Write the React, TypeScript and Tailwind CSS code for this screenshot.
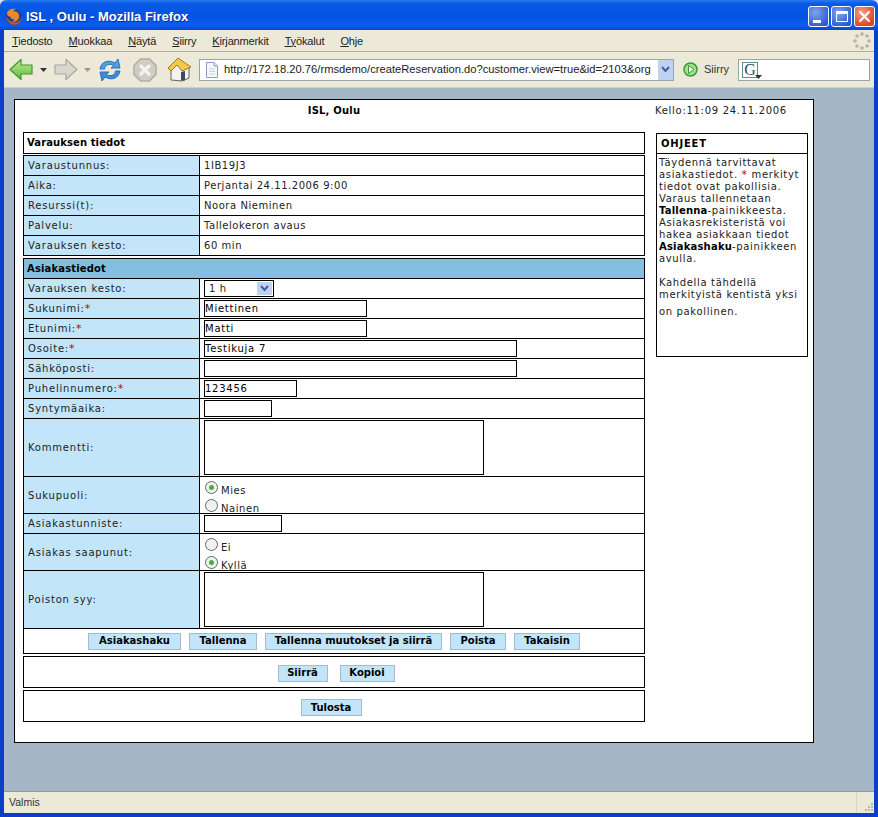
const Star = () => <span className="text-[#c00000] text-[11px] leading-none">*</span>;

function Firefox() {
  return (
    <svg width="18" height="18" viewBox="0 0 18 18" className="shrink-0">
      <circle cx="9" cy="9" r="8" fill="#31407f" />
      <circle cx="9.500" cy="7.500" r="4.200" fill="#7f93c8" />
      <path d="M2 5 C3 1.500 7 0 11 1 C9 1.500 8 3 8.500 4.200 C10.500 3.500 14 5 14 8.500 C14 12.500 10 14.500 6.500 13.500 C9 13.500 10.500 11.500 9.500 9.800 C8.500 10.800 5.500 10.500 5.200 8.500 C3.200 8.500 1.800 7 2 5Z" fill="#ef8a1e" />
      <path d="M1.500 8.500 C1.500 13 5 17 9.500 16.800 C14 16.600 16.800 12.800 16.700 8.500 C16 12.500 13 15 9 14.600 C5.500 14.200 2.800 12 1.500 8.500Z" fill="#d9541a" />
    </svg>
  );
}

function Arrow({ dir, green }: { dir: "l" | "r"; green?: boolean }) {
  const d = "M1 11.500 L12 1.500 V7 H23 V16 H12 V21.500Z";
  return (
    <svg width="24" height="23" viewBox="0 0 24 23" className={dir === "r" ? "-scale-x-100" : ""}>
      <defs>
        <linearGradient id="greenArrow" x1="0" y1="0" x2="0" y2="1">
          <stop offset="0" stopColor="#c6ee94" />
          <stop offset="1" stopColor="#58b83c" />
        </linearGradient>
      </defs>
      <path d={d} fill={green ? "url(#greenArrow)" : "#d9d8d0"} stroke={green ? "#3c9a2c" : "#a8a8a0"} strokeWidth="1.200" strokeLinejoin="round" />
    </svg>
  );
}

function Caret({ dim }: { dim?: boolean }) {
  return (
    <svg width="7" height="4" viewBox="0 0 7 4">
      <path d="M0 0H7L3.500 4Z" fill={dim ? "#9a9a94" : "#333"} />
    </svg>
  );
}

function Reload() {
  return (
    <svg width="24" height="26" viewBox="0 0 24 26">
      <path d="M2 12 C3 5 10 2 17 6 L20 2 L22 11 L13 11 L16 8.500 C11 6 7 8 6.500 12Z" fill="#4f9fe6" stroke="#2a6fc0" strokeWidth="1" strokeLinejoin="round" />
      <path d="M22 14 C21 21 14 24 7 20 L4 24 L2 15 L11 15 L8 17.500 C13 20 17 18 17.500 14Z" fill="#3a8ade" stroke="#2a6fc0" strokeWidth="1" strokeLinejoin="round" />
    </svg>
  );
}

function Stop() {
  return (
    <svg width="24" height="24" viewBox="0 0 24 24">
      <path d="M7.500 1 H16.500 L23 7.500 V16.500 L16.500 23 H7.500 L1 16.500 V7.500Z" fill="#cfcdc4" stroke="#aeaca4" strokeWidth="1.500" />
      <path d="M8 8 L16 16 M16 8 L8 16" stroke="#f4f3ee" strokeWidth="3.200" strokeLinecap="round" />
    </svg>
  );
}

function Home() {
  return (
    <svg width="25" height="25" viewBox="0 0 25 25">
      <path d="M4 12 V23 L15 24 L22 21 V11 L11 4Z" fill="#f4f3ee" stroke="#5f666e" strokeWidth="1" />
      <path d="M1 11 L11 1 L24 10 L15 14 L10 8 L4 14Z" fill="#f2c94a" stroke="#a07820" strokeWidth="1" strokeLinejoin="round" />
      <path d="M14 15 L18 14 V23.500 L14 23.500Z" fill="#3f4c60" />
    </svg>
  );
}

function PageIcon() {
  return (
    <svg width="14" height="16" viewBox="0 0 14 16">
      <path d="M1.500 .5 H9 L12.500 4 V15.500 H1.500Z" fill="#f4f7fd" stroke="#8a9cc0" />
      <path d="M9 .5 V4 H12.500" fill="#dfe6f5" stroke="#8a9cc0" />
      <path d="M4 7H10M4 9.500H10M4 12H10" stroke="#c4d0e8" />
    </svg>
  );
}

function Chevron() {
  return (
    <svg width="9" height="7" viewBox="0 0 9 7">
      <path d="M1 1 L4.500 5 L8 1" fill="none" stroke="#3f5f9f" strokeWidth="2" />
    </svg>
  );
}

function Go() {
  return (
    <svg width="15" height="15" viewBox="0 0 15 15">
      <circle cx="7.500" cy="7.500" r="6.500" fill="#a4e08a" stroke="#3c9a3c" strokeWidth="1.500" />
      <path d="M5.500 3.500 L11 7.500 L5.500 11.500Z" fill="#f0fbe8" stroke="#3c9a3c" />
    </svg>
  );
}

function Throbber() {
  const dots = [[9, 2], [14, 4], [16, 9], [14, 14], [9, 16], [4, 14], [2, 9], [4, 4]];
  return (
    <svg width="18" height="18" viewBox="0 0 18 18">
      {dots.map(([x, y]) => (
        <circle key={`${x}-${y}`} cx={x} cy={y} r="1.800" fill="#b5b3aa" />
      ))}
    </svg>
  );
}

function Grip() {
  const dots = [[9, 2], [6, 5], [9, 5], [3, 8], [6, 8], [9, 8]];
  return (
    <svg width="12" height="11" viewBox="0 0 12 11">
      {dots.map(([x, y]) => (
        <rect key={`${x}-${y}`} x={x} y={y} width="2" height="2" fill="#bdb9a8" />
      ))}
    </svg>
  );
}

function WinBtn({ kind }: { kind: "min" | "max" | "close" }) {
  const bg =
    kind === "close"
      ? "bg-[radial-gradient(circle_at_35%_30%,#f0a088,#d84a20_75%)]"
      : "bg-[radial-gradient(circle_at_35%_30%,#7ea4f0,#2a5ad0_80%)]";
  return (
    <div className={`w-[21px] h-[21px] rounded-[3px] border border-white flex items-center justify-center ${bg}`}>
      {kind === "min" && <div className="w-[8px] h-[3px] bg-white mt-[9px] -ml-[4px]" />}
      {kind === "max" && <div className="w-[12px] h-[11px] border border-white border-t-[3px]" />}
      {kind === "close" && (
        <svg width="13" height="13" viewBox="0 0 13 13">
          <path d="M2 2 L11 11 M11 2 L2 11" stroke="white" strokeWidth="2.200" strokeLinecap="round" />
        </svg>
      )}
    </div>
  );
}

function Row({
  label,
  h = 20,
  children,
}: {
  label: React.ReactNode;
  h?: number;
  children: React.ReactNode;
}) {
  const hClass: Record<number, string> = {
    20: "h-[20px]",
    37: "h-[37px]",
    58: "h-[58px]",
  };
  return (
    <div className={`flex border-b border-black ${hClass[h]}`}>
      <div className="w-[176px] shrink-0 bg-[#c2e5fa] border-r border-black flex items-center pl-[4px] text-[#222] tracking-[0.8px] whitespace-nowrap">
        {label}
      </div>
      <div className="flex-1 min-w-0 pl-[4px] flex items-center text-[#222] tracking-[0.55px]">{children}</div>
    </div>
  );
}

function Field({ w }: { w: string }) {
  return <div className={`h-[17px] border border-black bg-white ${w}`} />;
}

function ValueField({ w, value }: { w: string; value: string }) {
  return (
    <input
      readOnly
      value={value}
      className={`h-[17px] border border-black bg-white ${w} pl-0 outline-none text-[10px] tracking-[0.75px] text-black`}
    />
  );
}

function Area() {
  return <textarea readOnly className="w-[280px] h-[55px] border border-black bg-white resize-none block outline-none" />;
}

function Radio({ checked, label }: { checked?: boolean; label: string }) {
  return (
    <div className="flex h-[18px] items-start">
      <span className="ml-[1px] w-[13px] h-[13px] rounded-full border border-[#5c6a6a] bg-[#f2f2ec] flex items-center justify-center mt-[1px] shrink-0">
        {checked && <span className="w-[5px] h-[5px] rounded-full bg-[#4ca84c]" />}
      </span>
      <span className="ml-[3px] mt-[5px] leading-[12px]">{label}</span>
    </div>
  );
}

function Btn({ w, children }: { w: string; children: React.ReactNode }) {
  return (
    <button className={`h-[17px] ${w} bg-[#c2e5fa] border border-[#a3bccd] font-bold text-[10px] text-black flex items-center justify-center leading-none tracking-normal`}>
      {children}
    </button>
  );
}

export default function App() {
  const menu: [string, string][] = [
    ["T", "iedosto"],
    ["M", "uokkaa"],
    ["N", "äytä"],
    ["S", "iirry"],
    ["K", "irjanmerkit"],
    ["Ty", "ökalut"],
    ["O", "hje"],
  ];
  return (
    <div className="w-[878px] h-[817px] flex flex-col overflow-hidden font-['DejaVu_Sans',sans-serif] text-[10px] tracking-[0.45px] bg-[#dfe5f0]">
      {/* title bar */}
      <div className="h-[30px] shrink-0 flex items-center pl-[5px] pr-[3px] pt-[3px] rounded-t-[6px] bg-[linear-gradient(#2a7af0_0%,#0a5ae8_12%,#0553e2_50%,#0a5cf0_85%,#0348c8_100%)]">
        <Firefox />
        <span className="ml-[3px] text-white font-bold text-[13px] tracking-normal font-['Liberation_Sans',sans-serif] [text-shadow:1px_1px_0_#0a2f90]">
          ISL , Oulu - Mozilla Firefox
        </span>
        <div className="ml-auto flex gap-[2px]">
          <WinBtn kind="min" />
          <WinBtn kind="max" />
          <WinBtn kind="close" />
        </div>
      </div>

      <div className="flex-1 min-h-0 flex flex-col border-x-4 border-[#0a3fc8] bg-[#ece9d8]">
        {/* menu */}
        <div className="h-[22px] shrink-0 flex items-center pl-[8px] pt-[1px] gap-[16px] border-b border-[#b0ae9e] text-[11px] tracking-[-0.15px] text-[#222] font-['Liberation_Sans',sans-serif]">
          {menu.map(([u, rest]) => (
            <span key={u}>
              <span className="underline">{u}</span>
              {rest}
            </span>
          ))}
          <div className="ml-auto mr-[3px]">
            <Throbber />
          </div>
        </div>

        {/* toolbar */}
        <div className="h-[36px] shrink-0 flex items-center font-['Liberation_Sans',sans-serif] tracking-normal border-b border-[#d4d0c0]">
          <div className="ml-[5px]"><Arrow dir="l" green /></div>
          <div className="ml-[7px]"><Caret /></div>
          <div className="ml-[7px]"><Arrow dir="r" /></div>
          <div className="ml-[6px]"><Caret dim /></div>
          <div className="ml-[7px]"><Reload /></div>
          <div className="ml-[11px]"><Stop /></div>
          <div className="ml-[10px]"><Home /></div>
          <div className="ml-[7px] w-[475px] h-[22px] bg-white border border-[#9aa5a5] flex items-center pl-[5px]">
            <PageIcon />
            <span className="ml-[5px] text-[11.2px] text-[#222] whitespace-nowrap flex-1 min-w-0">
              http://172.18.20.76/rmsdemo/createReservation.do?customer.view=true&amp;id=2103&amp;org
            </span>
            <div className="w-[15px] h-[20px] bg-[#c0d2f2] flex items-center justify-center shrink-0">
              <Chevron />
            </div>
          </div>
          <div className="ml-[9px]"><Go /></div>
          <span className="ml-[6px] text-[11px] text-[#333]">Siirry</span>
          <div className="ml-[9px] w-[132px] h-[22px] bg-white border border-[#9aa5a5] flex items-center pl-[3px]">
            <div className="relative w-[16px] h-[16px] border border-[#5f8f8f] flex items-center justify-center font-['Liberation_Serif',serif] text-[16px] leading-none text-[#2c4a6a]">
              G
              <span className="absolute -right-[5px] bottom-[-2px]"><Caret /></span>
            </div>
          </div>
        </div>

        {/* content */}
        <div className="flex-1 min-h-0 bg-[#a5b7c7] pt-[11px] pl-[10px] border-b border-[#8e9a9e]">
          <div className="w-[800px] h-[644px] bg-white border border-black pl-[8px] text-[#222]">
            <div className="flex h-[32px]">
              <div className="w-[622px] flex justify-center pt-[5px] font-bold text-black text-[10px] leading-[12px] tracking-[0.2px]">
                ISL, Oulu
              </div>
              <div className="ml-[10px] pt-[5px] leading-[12px] whitespace-nowrap tracking-[0.7px]">
                Kello:11:09 24.11.2006
              </div>
            </div>

            <div className="flex items-start">
              <div className="w-[622px] shrink-0">
                <div className="h-[22px] border border-black flex items-center pl-[3px] pb-[2px] font-bold text-black tracking-[0.1px]">
                  Varauksen tiedot
                </div>
                <div className="mt-[1px] border-x border-t border-black">
                  <Row label="Varaustunnus:">1IB19J3</Row>
                  <Row label="Aika:">Perjantai 24.11.2006 9:00</Row>
                  <Row label="Resurssi(t):">Noora Nieminen</Row>
                  <Row label="Palvelu:">Tallelokeron avaus</Row>
                  <Row label="Varauksen kesto:">60 min</Row>
                </div>

                <div className="mt-[2px] border-x border-t border-black">
                  <div className="h-[20px] bg-[#82bfe0] border-b border-black flex items-center pl-[3px] font-bold text-black tracking-[0.15px]">
                    Asiakastiedot
                  </div>
                  <Row label="Varauksen kesto:">
                    <div className="w-[70px] h-[17px] border border-black flex items-center pl-[4px] justify-between">
                      <span>1 h</span>
                      <div className="w-[15px] h-[13px] bg-[#c0d2f2] flex items-center justify-center mr-[1px]">
                        <Chevron />
                      </div>
                    </div>
                  </Row>
                  <Row label={<span>Sukunimi:<Star /></span>}><ValueField w="w-[163px]" value="Miettinen" /></Row>
                  <Row label={<span>Etunimi:<Star /></span>}><ValueField w="w-[163px]" value="Matti" /></Row>
                  <Row label={<span>Osoite:<Star /></span>}><ValueField w="w-[313px]" value="Testikuja 7" /></Row>
                  <Row label="Sähköposti:"><Field w="w-[313px]" /></Row>
                  <Row label={<span>Puhelinnumero:<Star /></span>}><ValueField w="w-[93px]" value="123456" /></Row>
                  <Row label="Syntymäaika:"><Field w="w-[68px]" /></Row>
                  <Row label="Kommentti:" h={58}><Area /></Row>
                  <Row label="Sukupuoli:" h={37}>
                    <div className="mt-[5px]">
                      <Radio checked label="Mies" />
                      <Radio label="Nainen" />
                    </div>
                  </Row>
                  <Row label="Asiakastunniste:"><Field w="w-[78px]" /></Row>
                  <Row label="Asiakas saapunut:" h={37}>
                    <div className="mt-[5px]">
                      <Radio label="Ei" />
                      <Radio checked label="Kyllä" />
                    </div>
                  </Row>
                  <Row label="Poiston syy:" h={58}><Area /></Row>
                  <div className="h-[25px] border-b border-black flex items-center justify-center gap-[8px]">
                    <Btn w="w-[93px]">Asiakashaku</Btn>
                    <Btn w="w-[68px]">Tallenna</Btn>
                    <Btn w="w-[177px]">Tallenna muutokset ja siirrä</Btn>
                    <Btn w="w-[56px]">Poista</Btn>
                    <Btn w="w-[66px]">Takaisin</Btn>
                  </div>
                </div>

                <div className="mt-[2px] h-[32px] border border-black flex items-center justify-center gap-[12px] pl-[4px] pt-[2px]">
                  <Btn w="w-[50px]">Siirrä</Btn>
                  <Btn w="w-[55px]">Kopioi</Btn>
                </div>
                <div className="mt-[2px] h-[32px] border border-black flex items-center justify-center pr-[6px] pt-[3px]">
                  <Btn w="w-[61px]">Tulosta</Btn>
                </div>
              </div>

              <div className="ml-[11px] w-[152px] h-[224px] mt-[1px] border border-black shrink-0">
                <div className="h-[20px] border-b border-black flex items-center pl-[4px] font-bold text-black tracking-[0.8px]">
                  OHJEET
                </div>
                <div className="pl-[2px] pt-[3px] leading-[12px] tracking-[0.65px]">
                  Täydennä tarvittavat asiakastiedot. <Star /> merkityt tiedot ovat pakollisia. Varaus tallennetaan{" "}
                  <b className="text-black tracking-[0.2px]">Tallenna</b>-painikkeesta. Asiakasrekisteristä voi hakea asiakkaan tiedot{" "}
                  <b className="text-black tracking-[0.2px]">Asiakashaku</b>-painikkeen avulla.
                  <div className="mt-[12px]">Kahdella tähdellä merkityistä kentistä yksi</div>
                  <div className="mt-[5px]">on pakollinen.</div>
                </div>
              </div>
            </div>
          </div>
        </div>

        {/* status */}
        <div className="h-[21px] shrink-0 flex items-center pl-[5px] text-[10.5px] tracking-normal text-[#333] font-['Liberation_Sans',sans-serif]">
          Valmis
          <div className="ml-auto h-full w-[18px] border-l border-[#d8d4c4] flex items-end justify-end pb-[1px]">
            <Grip />
          </div>
        </div>
      </div>
      <div className="h-[4px] shrink-0 bg-[#0a3fc8]" />
    </div>
  );
}
